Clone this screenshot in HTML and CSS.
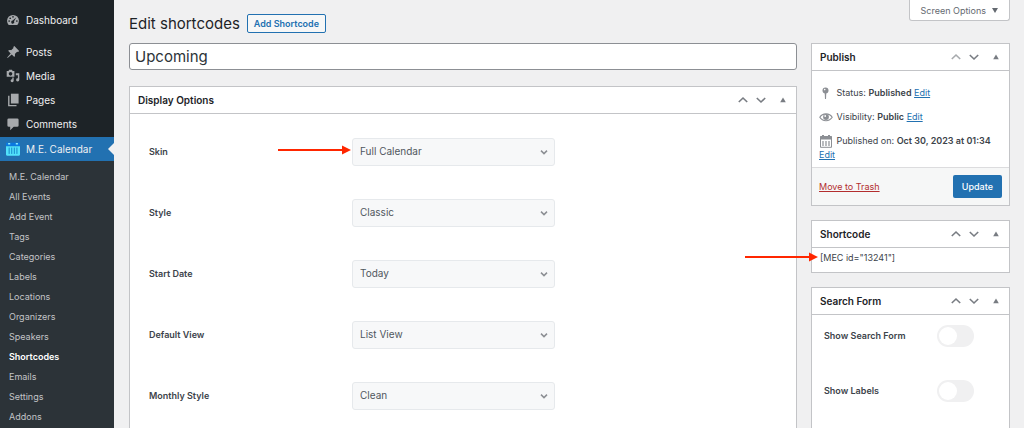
FILE: index.html
```html
<!DOCTYPE html>
<html lang="en">
<head>
  <meta charset="UTF-8">
  <meta name="viewport" content="width=device-width, initial-scale=1">
  <title>Edit shortcodes</title>
  <link rel="stylesheet" href="styles.css">
</head>
<body>

<!-- shared icons -->
<svg class="sprite" aria-hidden="true">
  <symbol id="i-up" viewBox="0 0 12 12"><path d="M1.8 8 6 4l4.200 4" fill="none" stroke="currentColor" stroke-width="1.600"/></symbol>
  <symbol id="i-down" viewBox="0 0 12 12"><path d="M1.800 4 6 8l4.200-4" fill="none" stroke="currentColor" stroke-width="1.600"/></symbol>
  <symbol id="i-toggle" viewBox="0 0 12 12"><path d="M6 3.500 8.800 8.200H3.200z" fill="currentColor"/></symbol>
  <symbol id="i-select" viewBox="0 0 12 12"><path d="M3 4.600 6 7.600l3-3" fill="none" stroke="currentColor" stroke-width="1.500"/></symbol>
  <symbol id="i-arrow" viewBox="0 0 74 10"><path d="M0 5h66" stroke="currentColor" stroke-width="1.800"/><path d="M64 .6 73 5l-9 4.400z" fill="currentColor"/></symbol>
</svg>

<div class="admin">
  <nav class="sidebar">
    <ul class="menu">
      <li><a href="#">
        <svg class="menu-icon" viewBox="0 0 20 20"><path d="M3.800 17a8.500 8.500 0 1 1 12.400 0z" fill="currentColor"/><g fill="#1d2327"><circle cx="10" cy="5.500" r="1.200"/><circle cx="6" cy="7.500" r="1.200"/><circle cx="4.500" cy="11.400" r="1.200"/><circle cx="15.500" cy="11.400" r="1.200"/><path d="m14.600 6.400-3.100 5.300a2.200 2.200 0 1 1-2-1z"/></g></svg>
        Dashboard</a></li>
      <li class="menu-gap"><a href="#">
        <svg class="menu-icon" viewBox="0 0 20 20"><path d="m10.400 3 1.500-1.500 6.900 6.900-1.500 1.500-1.400-.3-3.300 3.400c.6 1.600.3 3.200-.7 4.300l-3.700-3.700-5.900 4.900-.6-.6 5-5.900L3 8.300c1.100-1 2.700-1.300 4.300-.7l3.400-3.300z" fill="currentColor"/></svg>
        Posts</a></li>
      <li><a href="#">
        <svg class="menu-icon" viewBox="0 0 20 20"><path fill-rule="evenodd" d="M1 3h2.500l1-2h4l1 2H12v8H1zm5.500 1.300a2.600 2.600 0 1 0 0 5.200 2.600 2.600 0 0 0 0-5.200z" fill="currentColor"/><path d="M14 6h5v9.500a2.300 2.300 0 1 1-2-2.300V9h-3zM11 12v4.800a2.200 2.200 0 1 1-2-2.300V12z" fill="currentColor"/></svg>
        Media</a></li>
      <li><a href="#">
        <svg class="menu-icon" viewBox="0 0 20 20"><path d="M7 1h11v14H7z" fill="currentColor"/><path d="M5 4H3v15h12v-2H5z" fill="currentColor"/></svg>
        Pages</a></li>
      <li><a href="#">
        <svg class="menu-icon" viewBox="0 0 20 20"><path d="M4 2h12a2 2 0 0 1 2 2v8a2 2 0 0 1-2 2h-5l-5 5v-5H4a2 2 0 0 1-2-2V4a2 2 0 0 1 2-2z" fill="currentColor"/></svg>
        Comments</a></li>
      <li class="menu-current"><a href="#">
        <svg class="menu-icon" viewBox="0 0 20 20"><path d="M0 1h20v5H0z" fill="#0a79e0"/><path d="M0 6h20v12a1.500 1.500 0 0 1-1.500 1.500h-17A1.500 1.500 0 0 1 0 18z" fill="#52e2fb"/><path d="M3 1.500h3v2H3zm11 0h3v2h-3z" fill="#8cecff"/><path d="M4.500 8v9M8.200 8v9M11.900 8v9M15.600 8v9" stroke="#1786c9" stroke-width="1.400"/></svg>
        M.E. Calendar</a></li>
    </ul>
    <ul class="submenu">
      <li><a href="#">M.E. Calendar</a></li>
      <li><a href="#">All Events</a></li>
      <li><a href="#">Add Event</a></li>
      <li><a href="#">Tags</a></li>
      <li><a href="#">Categories</a></li>
      <li><a href="#">Labels</a></li>
      <li><a href="#">Locations</a></li>
      <li><a href="#">Organizers</a></li>
      <li><a href="#">Speakers</a></li>
      <li><a href="#" class="current">Shortcodes</a></li>
      <li><a href="#">Emails</a></li>
      <li><a href="#">Settings</a></li>
      <li><a href="#">Addons</a></li>
    </ul>
  </nav>

  <main class="content">
    <header class="topbar">
      <h1>Edit shortcodes</h1>
      <button type="button" class="btn-outline">Add Shortcode</button>
      <button type="button" class="screen-options">Screen Options <span class="caret"></span></button>
    </header>

    <div class="columns">
      <div class="col-main">
        <input class="title-input" type="text" value="Upcoming" aria-label="Title">

        <section class="postbox">
          <div class="postbox-header">
            <h2>Display Options</h2>
            <button type="button" aria-label="Move up"><svg><use href="#i-up"/></svg></button>
            <button type="button" aria-label="Move down"><svg><use href="#i-down"/></svg></button>
            <button type="button" class="handle" aria-label="Toggle panel"><svg><use href="#i-toggle"/></svg></button>
          </div>
          <div class="options">
            <div class="option">
              <label for="skin">Skin</label>
              <div class="select">
                <select id="skin"><option>Full Calendar</option></select>
                <svg class="chevron"><use href="#i-select"/></svg>
                <svg class="pointer"><use href="#i-arrow"/></svg>
              </div>
            </div>
            <div class="option">
              <label for="style">Style</label>
              <div class="select">
                <select id="style"><option>Classic</option></select>
                <svg class="chevron"><use href="#i-select"/></svg>
              </div>
            </div>
            <div class="option">
              <label for="start">Start Date</label>
              <div class="select">
                <select id="start"><option>Today</option></select>
                <svg class="chevron"><use href="#i-select"/></svg>
              </div>
            </div>
            <div class="option">
              <label for="view">Default View</label>
              <div class="select">
                <select id="view"><option>List View</option></select>
                <svg class="chevron"><use href="#i-select"/></svg>
              </div>
            </div>
            <div class="option">
              <label for="monthly">Monthly Style</label>
              <div class="select">
                <select id="monthly"><option>Clean</option></select>
                <svg class="chevron"><use href="#i-select"/></svg>
              </div>
            </div>
          </div>
        </section>
      </div>

      <aside class="col-side">
        <section class="postbox">
          <div class="postbox-header">
            <h2>Publish</h2>
            <button type="button" aria-label="Move up" disabled><svg><use href="#i-up"/></svg></button>
            <button type="button" aria-label="Move down"><svg><use href="#i-down"/></svg></button>
            <button type="button" class="handle" aria-label="Toggle panel"><svg><use href="#i-toggle"/></svg></button>
          </div>
          <div class="publish">
            <p>
              <svg class="pub-icon" viewBox="0 0 14 14"><circle cx="6.500" cy="4.500" r="3" fill="currentColor"/><path d="M5.700 7h1.600L7 13H6z" fill="currentColor"/><circle cx="5.700" cy="3.600" r=".8" fill="#fff"/></svg>
              Status: <b>Published</b> <a href="#">Edit</a>
            </p>
            <p>
              <svg class="pub-icon" viewBox="0 0 14 14"><path d="M.8 7.300C3.500 2.700 10.500 2.700 13.200 7.300c-2.700 4.500-9.700 4.500-12.400 0z" fill="none" stroke="currentColor" stroke-width="1.100"/><circle cx="7" cy="7" r="2.900" fill="currentColor"/><circle cx="6.200" cy="6" r=".9" fill="#fff"/></svg>
              Visibility: <b>Public</b> <a href="#">Edit</a>
            </p>
            <p>
              <svg class="pub-icon" viewBox="0 0 14 14"><path d="M1.500 2.500h11v10.800h-11z" fill="none" stroke="currentColor"/><path d="M1 2.500h12v3H1zM3 1h2v3H3zM9 1h2v3H9z" fill="currentColor"/><path d="M4 7v5M7 7v5M10 7v5" stroke="currentColor" stroke-width="1.200"/></svg>
              Published on: <b>Oct 30, 2023 at 01:34</b> <a href="#">Edit</a>
            </p>
          </div>
          <div class="publish-actions">
            <a href="#" class="trash">Move to Trash</a>
            <button type="submit" class="btn-primary">Update</button>
          </div>
        </section>

        <section class="postbox">
          <div class="postbox-header">
            <h2>Shortcode</h2>
            <button type="button" aria-label="Move up"><svg><use href="#i-up"/></svg></button>
            <button type="button" aria-label="Move down"><svg><use href="#i-down"/></svg></button>
            <button type="button" class="handle" aria-label="Toggle panel"><svg><use href="#i-toggle"/></svg></button>
          </div>
          <div class="shortcode">
            [MEC id="13241"]
            <svg class="pointer"><use href="#i-arrow"/></svg>
          </div>
        </section>

        <section class="postbox">
          <div class="postbox-header">
            <h2>Search Form</h2>
            <button type="button" aria-label="Move up"><svg><use href="#i-up"/></svg></button>
            <button type="button" aria-label="Move down"><svg><use href="#i-down"/></svg></button>
            <button type="button" class="handle" aria-label="Toggle panel"><svg><use href="#i-toggle"/></svg></button>
          </div>
          <div class="switches">
            <div class="switch-row">
              <label for="show-form">Show Search Form</label>
              <input type="checkbox" class="switch" id="show-form">
            </div>
            <div class="switch-row">
              <label for="show-labels">Show Labels</label>
              <input type="checkbox" class="switch" id="show-labels">
            </div>
          </div>
        </section>
      </aside>
    </div>
  </main>
</div>

</body>
</html>
```

FILE: styles.css
```css
* {
  box-sizing: border-box;
}
body {
  margin: 0;
  height: 100vh;
  overflow: hidden;
  background: #f0f0f1;
  color: #3c434a;
  font-family: Inter, "Liberation Sans", sans-serif;
  font-size: 9px;
  line-height: 14px;
}
button, input, select {
  font-family: inherit;
  margin: 0;
}
h1, h2, p, ul {
  margin: 0;
  padding: 0;
}
ul {
  list-style: none;
}
a {
  color: #2271b1;
}
.sprite {
  display: none;
}
.admin {
  display: flex;
  min-height: 100vh;
}

/* sidebar */
.sidebar {
  flex: 0 0 114px;
  background: #1d2327;
  display: flex;
  flex-direction: column;
}
.menu {
  padding-top: 8px;
}
.menu a {
  display: flex;
  align-items: center;
  gap: 6px;
  height: 24px;
  padding-left: 6px;
  color: #f0f0f1;
  font-size: 10px;
  text-decoration: none;
}
.menu-icon {
  width: 14px;
  height: 14px;
  color: #a7aaad;
}
.menu-gap {
  margin-top: 8px;
}
.menu-current {
  position: relative;
  margin-top: 1px;
  background: #2271b1;
}
.menu-current::after {
  content: "";
  position: absolute;
  right: 0;
  top: 6px;
  border: 6px solid transparent;
  border-left-width: 0;
  border-right-color: #f0f0f1;
}
.submenu {
  flex: 1;
  background: #2c3338;
  padding-top: 6px;
}
.submenu a {
  display: block;
  padding-left: 9px;
  color: #c3c4c7;
  line-height: 20px;
  text-decoration: none;
}
.submenu .current {
  color: #fff;
  font-weight: 600;
}

/* page header */
.content {
  flex: 1;
  padding: 0 14px 0 15px;
}
.topbar {
  display: flex;
  align-items: flex-start;
  gap: 7px;
  height: 43px;
}
.topbar h1 {
  margin-top: 14px;
  color: #1d2327;
  font-size: 15px;
  font-weight: 400;
  line-height: 20px;
}
.btn-outline {
  margin-top: 14px;
  height: 19px;
  padding: 0 6px;
  background: #f6f7f7;
  border: 1px solid #2271b1;
  border-radius: 2px;
  color: #2271b1;
  font-size: 9px;
  font-weight: 600;
}
.screen-options {
  display: flex;
  align-items: center;
  gap: 6px;
  margin-left: auto;
  height: 21px;
  padding: 0 11px;
  background: #fff;
  border: 1px solid #c3c4c7;
  border-top: 0;
  border-radius: 0 0 3px 3px;
  color: #646970;
  font-size: 9px;
}
.caret {
  border: 3px solid transparent;
  border-top: 5px solid #646970;
  border-bottom: 0;
}

/* columns and boxes */
.columns {
  display: flex;
  gap: 14px;
  align-items: flex-start;
}
.col-main {
  flex: 1;
}
.col-side {
  flex: 0 0 199px;
}
.title-input {
  display: block;
  width: 100%;
  height: 27px;
  margin-bottom: 16px;
  padding: 0 5px;
  background: #fff;
  border: 1px solid #8c8f94;
  border-radius: 3px;
  color: #2c3338;
  font-size: 15px;
}
.postbox {
  margin-bottom: 14px;
  background: #fff;
  border: 1px solid #c3c4c7;
}
.postbox-header {
  display: flex;
  align-items: center;
  height: 27px;
  padding: 0 7px 0 8px;
  border-bottom: 1px solid #c3c4c7;
}
.postbox-header h2 {
  flex: 1;
  color: #1d2327;
  font-size: 10px;
  font-weight: 600;
}
.postbox-header button {
  display: flex;
  justify-content: center;
  width: 18px;
  padding: 0;
  background: none;
  border: 0;
  color: #787c82;
}
.postbox-header button:disabled {
  color: #a7aaad;
}
.postbox-header .handle {
  width: 12px;
  margin-left: 7px;
}
.postbox-header svg {
  width: 12px;
  height: 12px;
}

/* display options */
.options {
  padding: 24px 19px;
}
.option {
  display: flex;
  align-items: center;
  margin-bottom: 33px;
}
.option label {
  flex: 0 0 203px;
  font-weight: 600;
}
.select {
  position: relative;
  flex: 0 0 203px;
}
.select select {
  display: block;
  width: 100%;
  height: 28px;
  padding: 0 24px 2px 7px;
  appearance: none;
  background: #f7f8f9;
  border: 1px solid #e6e9ec;
  border-radius: 3px;
  color: #50575e;
  font-size: 10px;
}
.chevron {
  position: absolute;
  right: 5px;
  top: 8px;
  width: 12px;
  height: 12px;
  color: #8c8f94;
  pointer-events: none;
}

/* red arrow in front of a field */
.pointer {
  position: absolute;
  right: 100%;
  top: 7px;
  width: 74px;
  height: 10px;
  color: #ff2600;
}

/* publish box */
.publish {
  padding: 15px 7px 5px;
}
.publish p {
  margin-bottom: 10px;
}
.publish p:last-child {
  margin-bottom: 0;
}
.publish b {
  font-weight: 600;
}
.pub-icon {
  width: 14px;
  height: 14px;
  margin: -4px 1px -2px 0;
  color: #8c8f94;
  vertical-align: -2px;
}
.publish-actions {
  display: flex;
  align-items: center;
  justify-content: space-between;
  padding: 7px;
  background: #f6f7f7;
  border-top: 1px solid #dcdcde;
}
.trash {
  color: #b32d2e;
}
.btn-primary {
  height: 23px;
  padding: 0 9px;
  background: #2271b1;
  border: 0;
  border-radius: 2px;
  color: #fff;
  font-size: 9px;
  font-weight: 500;
}
.shortcode {
  position: relative;
  padding: 3px 8px 7px;
}
.shortcode .pointer {
  right: 190px;
  top: 4px;
}

/* switches */
.switches {
  padding: 10px 35px 10px 12px;
}
.switch-row {
  display: flex;
  align-items: center;
  justify-content: space-between;
  height: 22px;
  margin-bottom: 33px;
}
.switch-row label {
  font-weight: 600;
}
.switch {
  appearance: none;
  width: 37px;
  height: 22px;
  padding: 2px;
  background: #f0f0f1;
  border-radius: 11px;
}
.switch::before {
  content: "";
  display: block;
  width: 18px;
  height: 18px;
  background: #fff;
  border-radius: 50%;
}
.switch:checked {
  background: #2271b1;
}
.switch:checked::before {
  margin-left: auto;
}
```
